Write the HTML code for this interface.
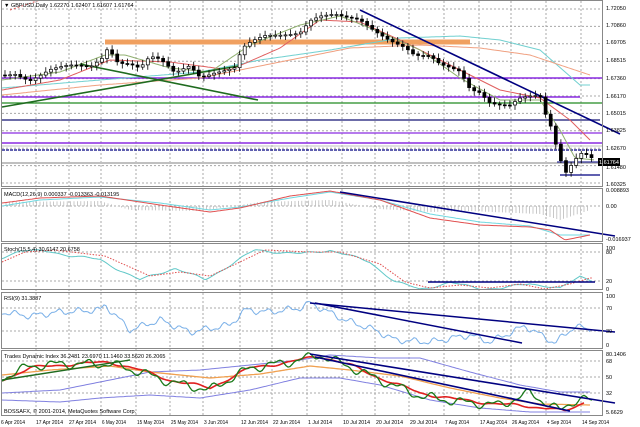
<!DOCTYPE html><html><head><style>
html,body{margin:0;padding:0;background:#fff;width:640px;height:427px;overflow:hidden}
svg{display:block;font-family:"Liberation Sans",sans-serif}
</style></head><body>
<svg id="s" width="640" height="427" viewBox="0 0 640 427" xmlns="http://www.w3.org/2000/svg">
<rect width="640" height="427" fill="#fff"/>
<g id="grid" stroke="#a8a8a8" stroke-width="1" stroke-dasharray="2,2"></g>
<g id="content"></g>
<g stroke="#888" fill="none" stroke-width="1">
<rect x="1.5" y="0.5" width="601" height="186"/>
<rect x="1.5" y="188.5" width="601" height="53"/>
<rect x="1.5" y="243.5" width="601" height="46"/>
<rect x="1.5" y="292.5" width="601" height="56"/>
<rect x="1.5" y="350.5" width="601" height="65"/>
</g>
<g font-size="5.5" fill="#000">
<text x="4" y="7">▼ GBPUSD,Daily  1.62270 1.62407 1.61607 1.61764</text>
<text x="4" y="196">MACD(12,26,9) 0.000337 -0.013363 -0.013195</text>
<text x="4" y="251">Stoch(15,5,4) 30.6147 20.6758</text>
<text x="4" y="300">RSI(9) 31.3887</text>
<text x="4" y="358">Trades Dynamic Index 36.2481 23.6970 11.1460 33.5620 26.2065</text>
<text x="4" y="413">BOSSAFX, © 2001-2014, MetaQuotes Software Corp.</text>
<g id="ax"></g>
</g>
</svg>
<script>
(function(){
var NS="http://www.w3.org/2000/svg",C=document.getElementById('content'),G=document.getElementById('grid'),A=document.getElementById('ax');
function el(p,t,a){var e=document.createElementNS(NS,t);for(var k in a)e.setAttribute(k,a[k]);p.appendChild(e);return e}
function interp(pts,x){for(var i=0;i<pts.length-1;i++){if(x<=pts[i+1][0]){var a=pts[i],b=pts[i+1],t=(x-a[0])/(b[0]-a[0]||1);return a[1]+(b[1]-a[1])*t}}return pts[pts.length-1][1]}
function line(pts,col,w,noise,f,x0,x1,dash){var d="";x0=x0||2;x1=x1||pts[pts.length-1][0];for(var x=x0;x<=x1;x+=2){var y=interp(pts,x)+(noise?noise*Math.sin(x*f)+noise*0.5*Math.sin(x*f*2.3+1):0);d+=(d?"L":"M")+x+" "+y.toFixed(1)}var a={d:d,stroke:col,"stroke-width":w||1,fill:"none"};if(dash)a["stroke-dasharray"]=dash;el(C,"path",a)}
function seg(x1,y1,x2,y2,c,w,dash){var a={x1:x1,y1:y1,x2:x2,y2:y2,stroke:c,"stroke-width":w||1};if(dash)a["stroke-dasharray"]=dash;el(C,"line",a)}
function txt(x,y,s,fs){var t=el(A,"text",{x:x,y:y});if(fs)t.setAttribute("font-size",fs);t.textContent=s;return t}
var gx=[36,69,101,136,170,203,240,272,307,342,375,409,444,479,511,546,581];
gx.forEach(function(x){el(G,"line",{x1:x,y1:1,x2:x,y2:416})});
for(var y=9;y<186;y+=17.4)el(G,"line",{x1:2,y1:y.toFixed(1),x2:602,y2:y.toFixed(1)});
[206,252,281,308,331,361,377,393].forEach(function(y){el(G,"line",{x1:2,y1:y,x2:602,y2:y})});
var dl=["6 Apr 2014","17 Apr 2014","27 Apr 2014","6 May 2014","15 May 2014","25 May 2014","3 Jun 2014","12 Jun 2014","22 Jun 2014","1 Jul 2014","10 Jul 2014","20 Jul 2014","29 Jul 2014","7 Aug 2014","17 Aug 2014","26 Aug 2014","4 Sep 2014","14 Sep 2014"];
var dx=[1,36,69,102,137,171,204,241,273,308,343,376,410,445,480,512,547,582];
dl.forEach(function(s,i){var t=txt(dx[i],424,s,"5");t.setAttribute("textLength",s.length>10?27:24);t.setAttribute("lengthAdjust","spacingAndGlyphs")});
[["1.72050",10],["1.70860",27],["1.69705",44],["1.68515",62],["1.67360",80],["1.66170",98],["1.65015",115],["1.63825",132],["1.62670",150],["1.61480",169],["1.60325",186]].forEach(function(a){txt(606,a[1],a[0])});
txt(606,192,"0.008893");txt(606,208,"0.00");txt(606,241,"-0.016937");
txt(606,250,"100");txt(606,254,"80");txt(606,283,"20");txt(606,291,"0");
txt(606,298,"100");txt(606,310,"70");txt(606,333,"30");txt(606,347,"0");
txt(606,356,"80.1406");txt(606,363,"68");txt(606,379,"50");txt(606,395,"32");txt(606,414,"5.6629");
seg(105,42,470,42,"#f0a060",5);
seg(2,78,602,78,"#8a2be2",1.5);seg(2,97,580,97,"#8a2be2",1.5);
seg(2,103,602,103,"#228b22",1.2);seg(2,120,600,120,"#3c3c8c",1.5);
seg(2,133,602,133,"#8a2be2",1.2);seg(2,143,602,143,"#8a2be2",1.5);
seg(2,146,602,146,"#c0c0c0",1);seg(2,150,602,150,"#000080",1.2,"3,1");seg(2,163,602,163,"#c0c0c0",2);
seg(560,175,600,175,"#000080",1.2);seg(557,162,600,162,"#000080",1);
line([[2,88],[100,80],[200,72],[260,60],[330,50],[400,38],[460,36],[500,40],[540,50],[580,85]],"#70d0d0",1,0,0,2,590);
line([[2,95],[100,85],[200,78],[280,62],[350,48],[420,45],[480,48],[530,55],[590,75]],"#f0a080",1,0,0,2,590);
line([[2,90],[60,80],[110,60],[170,62],[230,70],[280,48],[320,20],[360,22],[400,40],[450,65],[500,90],[540,98],[570,120],[590,140]],"#e06060",1);
line([[2,80],[60,72],[105,55],[125,55],[170,68],[210,72],[250,45],[300,25],[340,16],[380,32],[420,50],[460,78],[500,100],[540,100],[560,130],[575,158],[595,160]],"#90b070",1);
seg(10,10,40,0,"#e06060",1,"2,2");
seg(2,107,238,66,"#1f6b1f",1.6);seg(80,64,258,100,"#1f6b1f",1.6);
seg(360,10,620,134,"#000080",1.6);
var P=[[3,75],[15,72],[30,78],[50,70],[70,68],[90,68],[104,55],[108,45],[118,60],[130,62],[140,68],[150,58],[160,62],[175,75],[190,65],[200,75],[215,70],[235,68],[242,50],[250,45],[265,38],[280,35],[300,30],[310,18],[320,15],[335,16],[345,20],[360,22],[370,28],[380,33],[395,40],[405,45],[415,55],[430,58],[440,67],[450,70],[460,72],[470,88],[480,90],[490,100],[500,103],[510,105],[520,100],[540,98],[545,115],[552,130],[556,145],[565,172],[573,160],[580,150],[590,153],[594,160]];
var prev=interp(P,3);
for(var x=5;x<=594;x+=5.1){var c=interp(P,x)+3*Math.sin(x*1.3);var o=prev;var hi=Math.min(o,c)-2-Math.abs(Math.sin(x))*3,lo=Math.max(o,c)+2+Math.abs(Math.cos(x))*3;var cx=x.toFixed(1);
el(C,"line",{x1:cx,y1:hi.toFixed(1),x2:cx,y2:lo.toFixed(1),stroke:"#000","stroke-width":0.8});
var ty=Math.min(o,c),h=Math.max(Math.abs(c-o),1);el(C,"rect",{x:(x-1.5).toFixed(1),y:ty.toFixed(1),width:3,height:h.toFixed(1),fill:c>o?"#000":"#fff",stroke:"#000","stroke-width":0.7});prev=c}
el(C,"rect",{x:598,y:158,width:22,height:8,fill:"#000"});
var tt=el(A,"text",{x:599,y:164,fill:"#fff"});tt.textContent="1.61764";
for(var x2=6;x2<590;x2+=3.4){var v=interp([[2,-4],[100,-5],[130,4],[200,5],[260,-4],[330,-6],[380,3],[430,6],[470,5],[540,8],[560,14],[590,4]],x2);el(C,"line",{x1:x2.toFixed(1),y1:206,x2:x2.toFixed(1),y2:(206+v).toFixed(1),stroke:"#bbb","stroke-width":0.8})}
line([[2,206],[40,200],[100,197],[160,203],[210,210],[240,207],[290,198],[330,192],[380,200],[430,214],[480,222],[530,226],[560,235],[590,235]],"#70d8e0",1);
line([[2,203],[40,198],[100,196],[160,205],[210,212],[240,208],[290,196],[330,191],[380,200],[430,218],[480,225],[530,227],[550,230],[565,240],[590,235]],"#e05050",1);
seg(340,192,615,236,"#000080",1.5);
line([[2,258],[20,250],[50,252],[100,260],[140,280],[175,268],[205,280],[230,265],[255,250],[300,254],[330,250],[370,262],[395,282],[420,289],[450,283],[480,288],[500,289],[530,283],[560,289],[580,276],[592,280]],"#60c8c8",1,1,0.12);
line([[2,262],[25,252],[55,250],[105,256],[150,276],[180,272],[210,276],[240,262],[265,250],[310,252],[340,252],[380,264],[405,282],[430,288],[460,285],[490,288],[520,284],[545,289],[570,284],[590,278]],"#e05050",1,0,0,2,592,"1.5,1.5");
seg(428,282,595,282,"#000080",1.4);
line([[2,312],[30,316],[60,312],[100,310],[105,305],[130,330],[160,320],[190,332],[230,325],[245,310],[270,312],[300,308],[310,303],[345,320],[375,330],[395,340],[430,342],[470,335],[490,342],[525,326],[555,343],[575,326],[590,330]],"#7ab0e8",1,2.5,0.3);
seg(310,303,615,332,"#000080",1.5);seg(315,303,522,343,"#000080",1.5);
line([[2,393],[60,390],[110,380],[150,372],[200,370],[250,365],[300,360],[330,355],[380,358],[420,358],[470,372],[520,385],[560,392],[590,392]],"#8080e0",1);
line([[2,400],[60,402],[100,398],[150,395],[200,398],[250,390],[300,378],[340,378],[380,385],[430,400],[480,408],[530,412],[590,412]],"#8080e0",1);
line([[2,375],[50,370],[110,366],[150,372],[210,378],[260,374],[310,366],[350,370],[400,376],[450,388],[500,398],[540,404],[590,405]],"#f0a050",1.3);
line([[2,380],[30,368],[60,365],[110,362],[140,370],[170,380],[210,388],[250,368],[290,362],[320,356],[350,365],[380,378],[420,393],[460,400],[510,405],[550,408],[565,412],[585,402]],"#e02020",1.6,1.2,0.12);
line([[2,378],[30,366],[60,364],[110,364],[140,372],[170,382],[210,390],[250,368],[290,362],[320,355],[350,367],[380,380],[420,396],[460,402],[500,405],[530,393],[560,411],[575,400],[585,398],[592,403]],"#1a7a1a",1.3,3.5,0.2);
seg(2,380,130,360,"#1f6b1f",1.4);
seg(310,354,615,403,"#000080",1.6);seg(315,357,570,411,"#000080",1.6);
})();
</script>
</body></html>
